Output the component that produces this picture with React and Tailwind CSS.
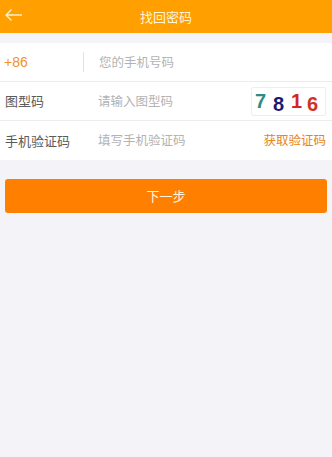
export default function App() {
  return (
    <div
      className="min-h-[457px] bg-[#f4f4f8]"
      style={{ fontFamily: '"Noto Sans CJK SC", "Liberation Sans", sans-serif' }}
    >
      {/* Header */}
      <div className="relative h-[33px] bg-[#ff9f00] flex items-center justify-center">
        <button className="absolute left-[4px] top-[6px] w-[20px] h-[18px] flex items-center">
          <svg width="19" height="14" viewBox="0 0 19 14" fill="none" stroke="#fff3d0" strokeWidth="1.3">
            <path d="M18 7H2M7.5 1.5L2 7l5.5 5.5" />
          </svg>
        </button>
        <span className="text-[13px] text-[#fff6dc]">找回密码</span>
      </div>

      {/* Form */}
      <div className="mt-[10px] bg-white">
        <div className="h-[39px] flex items-center border-b border-[#ececec]">
          <span className="w-[83px] pl-[4px] text-[14px] text-[#f0922e]" style={{ fontFamily: '"Liberation Sans", sans-serif' }}>+86</span>
          <span className="w-px h-[20px] bg-[#e2e2e2]" />
          <span className="pl-[15px] text-[12.5px] text-[#b3b3b3]">您的手机号码</span>
        </div>
        <div className="h-[39px] flex items-center border-b border-[#ececec]">
          <span className="w-[98px] pl-[5px] text-[13px] text-[#5a5a5a]">图型码</span>
          <span className="flex-1 text-[12.5px] text-[#b3b3b3]">请输入图型码</span>
          <div className="mr-[6px] w-[75px] h-[29px] border border-[#eeeeee] rounded-[2px] flex items-start pt-[3px] font-bold text-[20px] leading-none" style={{ fontFamily: '"Liberation Sans", sans-serif' }}>
            <span className="w-[11px] ml-[3px] text-[#2a8c84]">7</span>
            <span className="w-[11px] ml-[7px] mt-[3px] text-[#1a1a72]">8</span>
            <span className="w-[11px] ml-[7px] text-[#d42424]">1</span>
            <span className="w-[11px] ml-[5px] mt-[3px] text-[#d03226]">6</span>
          </div>
        </div>
        <div className="h-[39px] flex items-center">
          <span className="w-[98px] pl-[5px] text-[13px] text-[#5a5a5a]">手机验证码</span>
          <span className="flex-1 text-[12.5px] text-[#b3b3b3]">填写手机验证码</span>
          <span className="mr-[6px] text-[12.5px] text-[#e8841a]">获取验证码</span>
        </div>
      </div>

      {/* Button */}
      <div className="px-[5px] mt-[19px]">
        <button className="w-full h-[34px] rounded-[3px] bg-[#ff8000] text-[13px] text-[#fff6dc]">
          下一步
        </button>
      </div>
    </div>
  );
}
